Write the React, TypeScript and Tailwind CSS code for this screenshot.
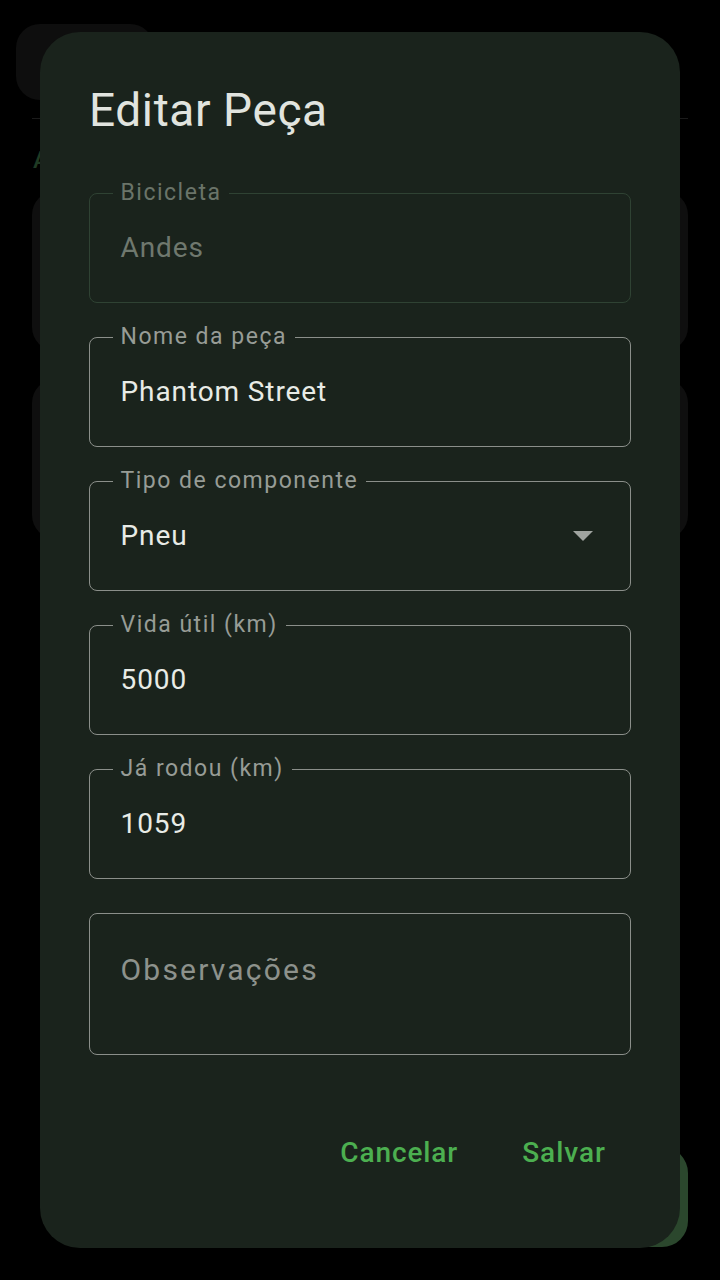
import type { ReactNode } from "react";

// Cor de fundo do diálogo, repetida no rótulo que corta a borda
const FIELD_LABEL_BG = "bg-[#1a231c]";

type FieldProps = {
  label?: string;
  value?: string;
  placeholder?: string;
  disabled?: boolean;
  tall?: boolean;
  trailing?: ReactNode;
};

function OutlinedField({ label, value, placeholder, disabled, tall, trailing }: FieldProps) {
  return (
    <div
      className={`relative flex items-center rounded-[8px] border-[1.5px] pl-[30.5px] pr-[36px] ${
        tall ? "h-[142px] items-start pt-[33px]" : "h-[110px]"
      } ${disabled ? "border-[#2f4233]" : "border-[#8b8f8a]"}`}
    >
      {label && (
        <span
          className={`absolute -top-[13.5px] left-[22.5px] px-[8px] text-[23px] leading-[24px] tracking-[1.5px] ${FIELD_LABEL_BG} ${
            disabled ? "text-[#6a7469]" : "text-[#979c96]"
          }`}
        >
          {label}
        </span>
      )}
      {value ? (
        <span
          className={`flex-1 text-[28px] tracking-[0.9px] ${
            disabled ? "text-[#6f786e]" : "text-[#e8ebe6]"
          }`}
        >
          {value}
        </span>
      ) : (
        <span className="flex-1 text-[30px] tracking-[2.2px] text-[#8d928c]">{placeholder}</span>
      )}
      {trailing}
    </div>
  );
}

function DropdownArrow() {
  return (
    <svg width="20" height="10" viewBox="0 0 20 10" className="mr-[1px]">
      <path d="M0 0 L20 0 L10 10 Z" fill="#a0a4a0" />
    </svg>
  );
}

export default function App() {
  return (
    <div
      className="relative h-[1280px] w-[720px] overflow-hidden bg-black"
      style={{ fontFamily: "Roboto, 'Noto Sans', sans-serif" }}
    >
      {/* Tela por trás do diálogo, escurecida pelo scrim */}
      <div className="flex flex-col">
        <div className="ml-[16px] mt-[24px] h-[76px] w-[138px] rounded-[24px] bg-[#0e0e0e]" />
        <div className="mx-[32px] mt-[18px] h-px bg-[#1b1b1b]" />
        <p className="ml-[33px] mt-[26px] text-[24px] font-medium leading-[30px] text-[#1f3a23]">
          Andes
        </p>
        <div className="mx-[32px] mt-[16px] h-[160px] rounded-[24px] bg-[#0f0f0f]" />
        <div className="mx-[32px] mt-[28px] h-[160px] rounded-[24px] bg-[#0f0f0f]" />
      </div>

      {/* FAB estendido no canto inferior */}
      <div className="absolute right-[32px] top-[1147px] h-[100px] w-[200px] rounded-[26px] bg-[#2b472d]" />

      {/* Diálogo */}
      <div className="absolute left-[40px] top-[32px] flex h-[1216px] w-[640px] flex-col rounded-[40px] bg-[#1a231c] px-[49px] pt-[52px]">
        <h1 className="text-[46px] leading-[52px] tracking-[0.6px] text-[#e1e4df]">Editar Peça</h1>

        <div className="mt-[57px] flex flex-col gap-[34px]">
          <OutlinedField label="Bicicleta" value="Andes" disabled />
          <OutlinedField label="Nome da peça" value="Phantom Street" />
          <OutlinedField label="Tipo de componente" value="Pneu" trailing={<DropdownArrow />} />
          <OutlinedField label="Vida útil (km)" value="5000" />
          <OutlinedField label="Já rodou (km)" value="1059" />
          <OutlinedField placeholder="Observações" tall />
        </div>

        <div className="mt-[77px] flex justify-end gap-[44px] pr-[15px]">
          <button className="px-[10px] text-[28px] font-medium tracking-[0.9px] text-[#4caf50]">
            Cancelar
          </button>
          <button className="px-[10px] text-[28px] font-medium tracking-[1px] text-[#4caf50]">
            Salvar
          </button>
        </div>
      </div>
    </div>
  );
}
